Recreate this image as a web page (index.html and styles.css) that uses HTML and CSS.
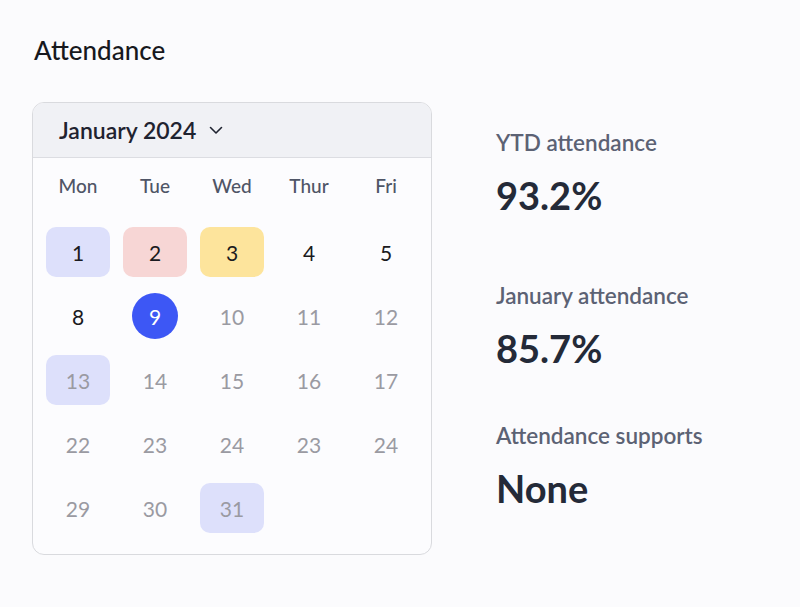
FILE: index.html
```html
<!DOCTYPE html>
<html lang="en">
<head>
<meta charset="utf-8">
<title>Attendance</title>
<link rel="stylesheet" href="styles.css">
</head>
<body>
<main class="page">
  <h1 class="title">Attendance</h1>
  <div class="content">
    <section class="calendar">
      <div class="cal-header">
        <span class="month">January 2024</span>
        <svg class="chevron" width="14" height="9" viewBox="0 0 14 9" aria-hidden="true"><path d="M1.5 1.5 L7 7 L12.5 1.5" fill="none" stroke="#1f2330" stroke-width="1.6" stroke-linecap="round" stroke-linejoin="round"/></svg>
      </div>
      <div class="cal-body">
        <div class="weekdays">
          <span>Mon</span><span>Tue</span><span>Wed</span><span>Thur</span><span>Fri</span>
        </div>
        <div class="days">
          <span class="day past blue">1</span>
          <span class="day past red">2</span>
          <span class="day past yellow">3</span>
          <span class="day past">4</span>
          <span class="day past">5</span>
          <span class="day past">8</span>
          <span class="day today"><span class="dot">9</span></span>
          <span class="day">10</span>
          <span class="day">11</span>
          <span class="day">12</span>
          <span class="day blue">13</span>
          <span class="day">14</span>
          <span class="day">15</span>
          <span class="day">16</span>
          <span class="day">17</span>
          <span class="day">22</span>
          <span class="day">23</span>
          <span class="day">24</span>
          <span class="day">23</span>
          <span class="day">24</span>
          <span class="day">29</span>
          <span class="day">30</span>
          <span class="day blue">31</span>
        </div>
      </div>
    </section>
    <section class="stats">
      <div class="stat">
        <div class="stat-label">YTD attendance</div>
        <div class="stat-value">93.2%</div>
      </div>
      <div class="stat stat-mid">
        <div class="stat-label">January attendance</div>
        <div class="stat-value">85.7%</div>
      </div>
      <div class="stat stat-last">
        <div class="stat-label">Attendance supports</div>
        <div class="stat-value">None</div>
      </div>
    </section>
  </div>
</main>
</body>
</html>
```
FILE: styles.css
```css
html, body {
  margin: 0;
  padding: 0;
  background: #fbfbfd;
}
body {
  font-family: Lato, "Noto Sans", "Liberation Sans", sans-serif;
  color: #1c1d24;
}
.page {
  padding: 34px 0 0 34px;
}
.title {
  margin: 0;
  font-size: 26px;
  line-height: 32px;
  font-weight: 500;
  color: #17181d;
}
.content {
  display: flex;
  align-items: flex-start;
  margin-top: 36px;
  margin-left: -2px;
}
.calendar {
  width: 400px;
  box-sizing: border-box;
  border: 1px solid #d9dade;
  border-radius: 12px;
  background: #fcfcfe;
  overflow: hidden;
}
.cal-header {
  height: 55px;
  box-sizing: border-box;
  background: #f0f1f5;
  border-bottom: 1px solid #dcdde2;
  display: flex;
  align-items: center;
  gap: 13px;
  padding-left: 26px;
}
.month {
  font-size: 23px;
  font-weight: 600;
  color: #1f2330;
}
.chevron {
  display: block;
  margin-top: 1px;
}
.cal-body {
  padding: 16px 13px 21px;
}
.weekdays {
  display: grid;
  grid-template-columns: repeat(5, 64px);
  column-gap: 13px;
  height: 24px;
  line-height: 24px;
  margin-bottom: 29px;
  text-align: center;
  font-size: 19px;
  font-weight: 500;
  color: #4f5566;
}
.days {
  display: grid;
  grid-template-columns: repeat(5, 64px);
  grid-auto-rows: 50px;
  column-gap: 13px;
  row-gap: 14px;
}
.day {
  display: flex;
  align-items: center;
  justify-content: center;
  border-radius: 10px;
  font-size: 21px;
  color: #9a9aa2;
}
.day.past {
  color: #1a1a20;
}
.blue {
  background: #dde0fb;
}
.red {
  background: #f7d6d5;
}
.yellow {
  background: #fde49c;
}
.dot {
  width: 46px;
  height: 46px;
  border-radius: 50%;
  background: #3d57f5;
  color: #ffffff;
  display: flex;
  align-items: center;
  justify-content: center;
}
.stats {
  margin-left: 64px;
  margin-top: 27px;
  display: flex;
  flex-direction: column;
}
.stat-label {
  font-size: 22.5px;
  line-height: 28px;
  font-weight: 600;
  color: #5c6274;
}
.stat-value {
  margin-top: 16px;
  font-size: 38px;
  line-height: 44px;
  font-weight: 700;
  color: #242a38;
}
.stat-mid {
  margin-top: 65px;
}
.stat-last {
  margin-top: 52px;
}
```
